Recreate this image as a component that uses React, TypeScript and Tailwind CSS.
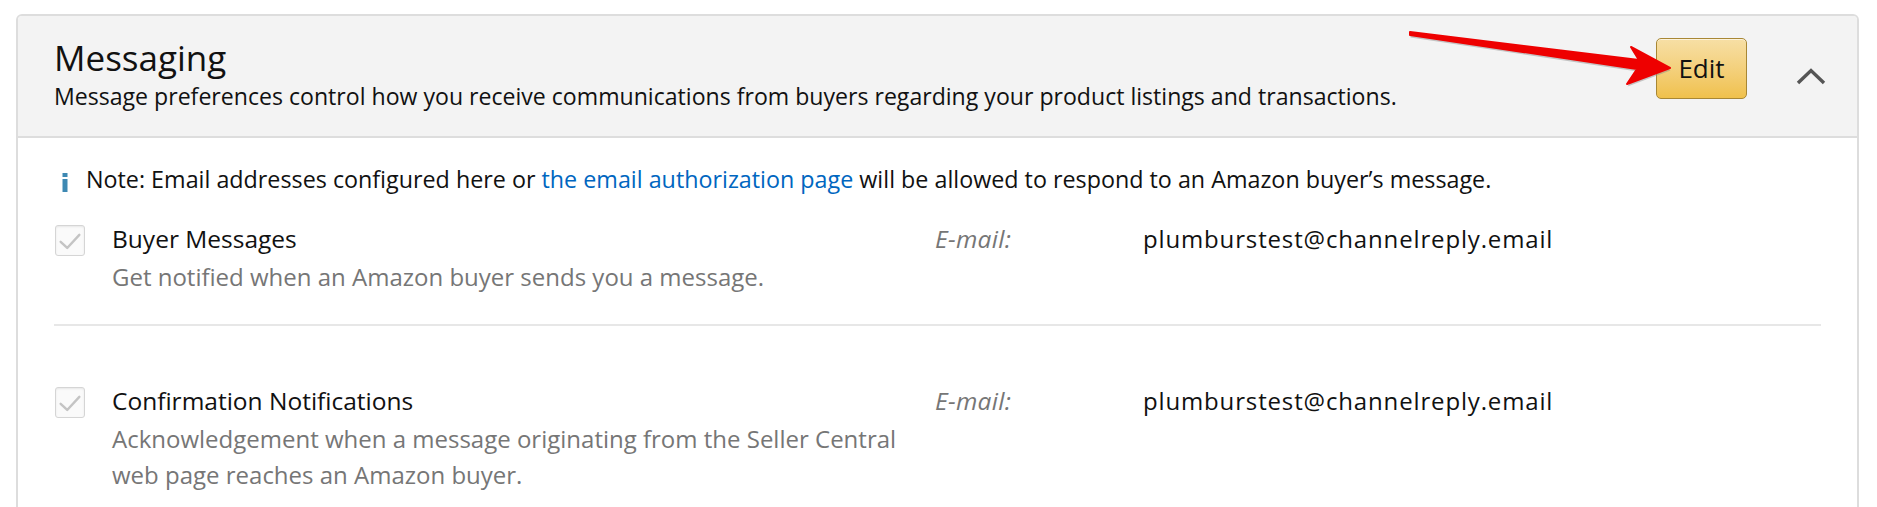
import React from 'react';

// Carte "Messaging" des préférences de notification (Seller Central)

const font = { fontFamily: '"Open Sans", "Liberation Sans", Arial, sans-serif' };

// ─── Petits éléments graphiques ───────────────────────────────────────────────

const CheckBox = () => (
    <div className="w-[30px] h-[31px] shrink-0 rounded-[3px] border border-[#d5d5d5] bg-[#fafafa] shadow-[inset_0_1px_2px_rgba(0,0,0,0.08)] flex items-center justify-center">
        <svg width="30" height="31" viewBox="0 0 30 31">
            <polyline points="5,17 12,23.5 25,9.5" fill="none" stroke="#c4c4c4" strokeWidth="2.6" strokeLinecap="round" strokeLinejoin="round" />
        </svg>
    </div>
);

const InfoIcon = () => (
    <svg width="6" height="19" viewBox="0 0 6 19" className="shrink-0">
        <rect x="0.5" y="0" width="5" height="4" fill="#3e89b3" />
        <rect x="0.5" y="6" width="5" height="13" fill="#3e89b3" />
    </svg>
);

const ChevronUp = () => (
    <svg width="30" height="17" viewBox="0 0 30 17">
        <polyline points="2,15 15,2.5 28,15" fill="none" stroke="#555555" strokeWidth="3.4" />
    </svg>
);

// Flèche rouge d'annotation posée sur la capture
const RedArrow = () => (
    <svg className="absolute left-0 top-0 pointer-events-none" width="1877" height="120" viewBox="0 0 1877 120">
        <polygon points="1410,33 1639,61 1631,48 1670,69 1627,85 1637,70 1410,36" fill="#8a8a8a" opacity="0.45" transform="translate(0.5,1.5)" />
        <polygon points="1410,32 1639,60 1631,47 1670,68 1627,84 1637,69 1410,35" fill="#ee0000" stroke="#ee0000" strokeWidth="2" strokeLinejoin="round" />
    </svg>
);

// ─── Ligne de préférence ──────────────────────────────────────────────────────

const PrefRow = ({ title, desc }: { title: string; desc: string }) => (
    <div className="grid grid-cols-[881px_208px_1fr] items-start">
        <div className="flex items-start">
            <div className="ml-[1px] mt-[3px]">
                <CheckBox />
            </div>
            <div className="ml-[27px] w-[810px]">
                <div className="text-[24.5px] leading-[33px] text-[#111111]">{title}</div>
                <div className="mt-[4px] text-[24px] leading-[36px] text-[#767676]">{desc}</div>
            </div>
        </div>
        <div className="text-[24.5px] leading-[33px] italic tracking-[0.3px] text-[#767676]">E-mail:</div>
        <div className="text-[24px] leading-[33px] tracking-[0.85px] text-[#111111]">plumburstest@channelreply.email</div>
    </div>
);

export default function App() {
    return (
        <div className="relative w-[1877px] h-[507px] overflow-hidden bg-white" style={font}>
            <div className="ml-[16px] mr-[18px] mt-[14px] border-2 border-[#dddddd] rounded-t-[6px]">
                {/* En-tête gris */}
                <div className="flex items-start bg-[#f3f3f3] border-b-2 border-[#dddddd] rounded-t-[4px] pl-[36px] pr-[31px] pt-[22px] pb-[25px]">
                    <div className="flex-1">
                        <div className="text-[35px] leading-[40px] text-[#111111]">Messaging</div>
                        <div className="mt-[3px] text-[23.1px] leading-[30px] text-[#111111]">
                            Message preferences control how you receive communications from buyers regarding your product listings and transactions.
                        </div>
                    </div>
                    <button className="w-[91px] h-[61px] rounded-[5px] border border-[#a88734] bg-gradient-to-b from-[#f7dfa5] to-[#f0c14b] text-[26px] text-[#111111] flex items-center justify-center shadow-[inset_0_1px_0_rgba(255,255,255,0.6)]">
                        Edit
                    </button>
                    <div className="ml-[49px] mt-[30px]">
                        <ChevronUp />
                    </div>
                </div>

                {/* Contenu */}
                <div className="bg-white px-[36px] pt-[26px] pb-[40px]">
                    <div className="flex items-start h-[30px]">
                        <div className="ml-[8px] mt-[9px]">
                            <InfoIcon />
                        </div>
                        <div className="ml-[18px] text-[23.3px] leading-[30px] text-[#111111]">
                            Note: Email addresses configured here or{' '}
                            <span className="text-[#0066c0]">the email authorization page</span>{' '}
                            will be allowed to respond to an Amazon buyer’s message.
                        </div>
                    </div>

                    <div className="mt-[28px]">
                        <PrefRow title="Buyer Messages" desc="Get notified when an Amazon buyer sends you a message." />
                    </div>

                    <div className="mt-[29px] h-[2px] bg-[#e7e7e7]" />

                    <div className="mt-[58px]">
                        <PrefRow
                            title="Confirmation Notifications"
                            desc="Acknowledgement when a message originating from the Seller Central web page reaches an Amazon buyer."
                        />
                    </div>
                </div>
            </div>
            <RedArrow />
        </div>
    );
}
